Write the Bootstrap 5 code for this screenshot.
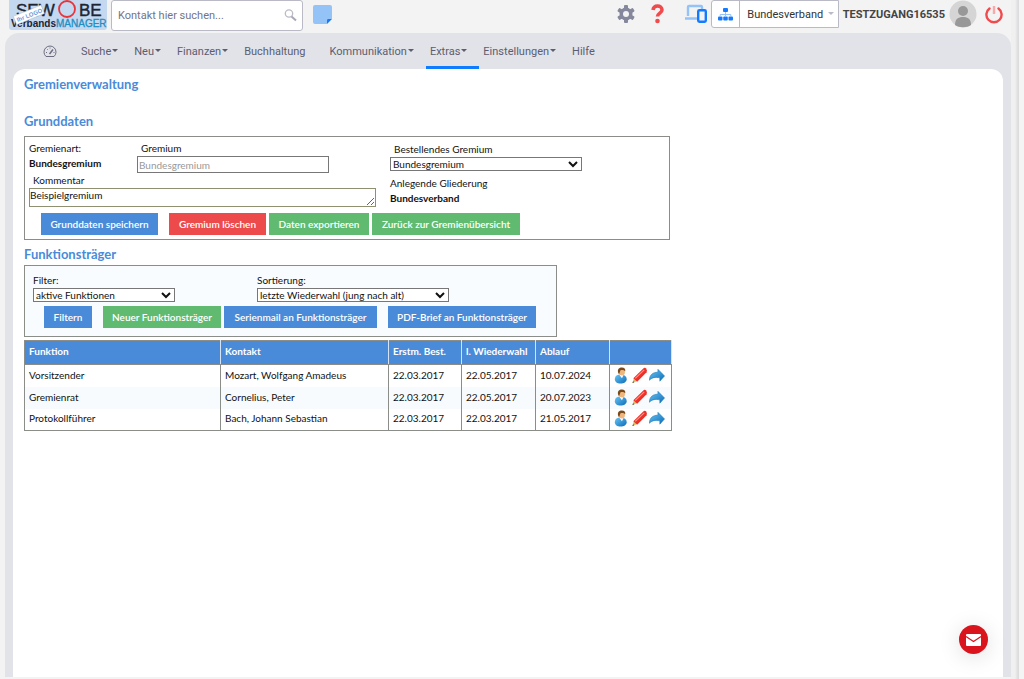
<!DOCTYPE html>
<html lang="de">
<head>
<meta charset="utf-8">
<meta name="viewport" content="width=device-width, initial-scale=1">
<title>Gremienverwaltung</title>
<link href="https://cdn.jsdelivr.net/npm/bootstrap@5.3.0/dist/css/bootstrap.min.css" rel="stylesheet">
<style>
  body { font: 10px/15px Lato, "Trebuchet MS", sans-serif; color: #111; background: #f3f3f4; }
  .page-shell { min-height: 100vh; padding: 0 0 2px 5px; }
  .scroll-rail { width: 13px; flex: none; background: linear-gradient(90deg, #f0f0f1 0 4px, #dcdcde 7px 8px, #f4f4f5 8px); }
  .topbar { height: 33px; padding: 0 8px 0 3px; font-family: Roboto, sans-serif; }
  .brand-logo { width: 100px; height: 31px; }
  .search-group { width: 192px; height: 31px; margin-left: 3px; background: #fff; border: 1px solid #b9bac6; border-radius: 3px; }
  .search-group input { min-width: 0; border: 0; outline: 0; background: none; font-size: 11px; padding: 0 0 0 6px; }
  .search-group input::placeholder { color: #737487; opacity: 1; }
  .plain-btn { border: 0; background: none; padding: 0; line-height: 0; }
  .org-picker { width: 128px; height: 28px; border: 1px solid #b9bac6; background: #fff; border-radius: 3px 0 0 3px; }
  .org-picker .tree { width: 28px; border-right: 1px solid #b9bac6; }
  .org-picker .name { font-size: 11px; color: #333; line-height: 15px; }
  .org-picker .name::after { color: #b9bac6; margin-left: 5px; border-width: 3px; border-bottom: 0; }
  .user-name { font-size: 11px; font-weight: 700; color: #444; }
  .frame { background: #e2e3e8; border-radius: 14px 14px 0 0; padding: 0 8px; }
  .mainnav { height: 36px; padding-left: 26px; font-family: Roboto, sans-serif; }
  .mainnav .nav-link { font-size: 11px; line-height: 37px; height: 36px; padding: 0 4px; color: #5c5d70; white-space: nowrap; }
  .mainnav .nav-link.dropdown-toggle::after { margin-left: 1px; border-width: 3px; border-bottom: 0; vertical-align: 3px; }
  .mainnav .nav-link.active { border-bottom: 3px solid #0f7bff; padding-right: 12px; }
  .sheet { background: #fff; border-radius: 12px 12px 0 0; padding: 8px 11px; }
  .sheet h1, .sheet h2 { font-size: 13px; line-height: 15px; font-weight: 700; color: #4a8bd9; margin: 0; }
  .sheet h1 { margin-bottom: 22px; }
  .panel { border: 1px solid #8a8d88; max-width: 646px; }
  .panel-filter { background: #f9fcff; max-width: 533px; height: 72px; padding: 7px 8px; }
  .panel-base { height: 104px; padding: 4px; margin-top: 7px; }
  .field { display: block; width: 192px; border: 1px solid #777; background: #fff; padding: 0; border-radius: 0; color: #111; }
  input.field { height: 17px; padding: 0 1px; }
  input.field::placeholder { color: #999; opacity: 1; }
  textarea.field { width: 347px; height: 19px; line-height: 13px; border-color: #8f9070; padding: 0; overflow: hidden; }
  select.field { height: 14px; line-height: 12px; padding: 0 16px 0 2px; appearance: none;
    background: #fff url("data:image/svg+xml,%3Csvg xmlns='http://www.w3.org/2000/svg' width='10' height='7'%3E%3Cpath d='M1 1l4 4 4-4' fill='none' stroke='%23111' stroke-width='2'/%3E%3C/svg%3E") no-repeat right 3px center; }
  select.short-field { width: 142px; }
  .col-left { width: 361px; }
  .col-right { padding-top: 1px; }
  .created-by { margin-top: 5px; }
  .col-kind { width: 108px; }
  .col-filter { width: 224px; }
  .act-row { margin-top: 6px; padding-left: 12px; }
  .filter-row { margin-top: 4px; padding-left: 11px; }
  .act-group { gap: 3px; margin: 0 11px; }
  .act { height: 22px; border: 0; border-radius: 0; color: #fff; line-height: 22px; font-weight: 600; padding: 0; white-space: nowrap; }
  .act-blue { background: #4a8bd9; } .act-red { background: #ed4a4c; } .act-green { background: #60bb70; }
  .w-a { width: 117px; } .w-b { width: 97px; } .w-c { width: 100px; } .w-d { width: 148px; }
  .w-e { width: 48px; } .w-f { width: 118px; } .w-g { width: 153px; }
  .people { width: 100%; max-width: 647px; table-layout: fixed; border: 1px solid #8a8d88; margin-top: 3px; border-collapse: collapse; }
  .people th { height: 24px; background: #4a8bd9; color: #fff; border-right: 1px solid #d5e3f5; border-bottom: 1px solid #8a8d88; padding: 0 0 2px 4px; white-space: nowrap; }
  .people td { height: 22px; border-right: 1px solid #8a8d88; padding: 0 0 1px 4px; white-space: nowrap; }
  .people tbody tr:nth-child(even) { background: #f8fbfe; }
  .mail-fab { position: fixed; right: 36px; bottom: 25px; width: 29px; height: 29px; border: 0; border-radius: 50%; background: #da141d; padding: 0; line-height: 0; box-shadow: 0 3px 22px #0002; }
</style>
</head>
<body>
<svg width="0" height="0" class="position-absolute" aria-hidden="true">
  <defs>
    <linearGradient id="blue" x2="1" y2="1"><stop stop-color="#69c5f5"/><stop offset="1" stop-color="#0b6cb8"/></linearGradient>
  </defs>
  <symbol id="person" viewBox="1 0 14 18">
    <path d="M1.500 13c0-4 3-5 6-5 4 0 6.500 2 6.500 5 0 3-3 4.500-6.500 4.500s-6-1.500-6-4.500z" fill="url(#blue)"/>
    <path d="M6 8l3 4 2-4z" fill="#fff"/>
    <ellipse cx="9" cy="5" rx="3.200" ry="4" fill="#efb77d"/>
    <path d="M5 6c-1-4 1-5.500 4-5.500 2.500 0 4 1.500 3.500 4C11 3 9 3 7.500 3.500 7 5 6.500 6 6 8z" fill="#7a4a1c"/>
  </symbol>
  <symbol id="pencil" viewBox="0 0 18 18">
    <path d="M1.500 17l1.500-5 3 3z" fill="#d7bd62"/><path d="M1.500 17l.7-2 1.300 1.200z" fill="#443"/>
    <path d="M2.500 12L12.500 2Q14.500 0 16 1.500T16.500 5.500L6.500 15.500z" fill="#ed3028"/>
    <path d="M4.500 12L14 3" stroke="#ff9184" stroke-width="1.200"/>
  </symbol>
  <symbol id="forward" viewBox="0 0 18 18">
    <path d="M1 14C1 8 5 5.500 10 5.500V2.500l7 7-5 5.500v-3.500C7 10.500 4 11 1 14z" fill="url(#blue)" stroke="#1679b4" stroke-width=".6"/>
  </symbol>
</svg>
<div class="d-flex">
  <div class="page-shell d-flex flex-column flex-grow-1">
    <header class="topbar d-flex align-items-start">
      <a href="#" aria-label="SEWOBE VerbandsMANAGER" class="flex-shrink-0 lh-1">
        <svg class="brand-logo" viewBox="0 0 100 31">
          <rect x="1" y="-4" width="98" height="34" rx="3" fill="#c4d8ef"/>
          <g font-family="Liberation Sans, sans-serif">
            <text x="8" y="16" font-size="17" fill="#1d2533" stroke="#1d2533" stroke-width=".4">SEW</text>
            <text x="71" y="16" font-size="17" fill="#1d2533" stroke="#1d2533" stroke-width=".4">BE</text>
            <circle cx="59" cy="9" r="8" fill="none" stroke="#e8343b" stroke-width="1.800"/>
            <text x="3" y="27" font-size="10" font-weight="700" fill="#223">Verbands</text>
            <text x="48" y="27" font-size="10" fill="#1c8fc4" stroke="#1c8fc4" stroke-width=".3">MANAGER</text>
            <g transform="rotate(-22 22 15)"><rect x="6" y="10" width="30" height="9" fill="#fff" stroke="#b5bcc5" stroke-width=".5"/><text x="8" y="17" font-size="6" font-weight="700" fill="#5f98dc">Ihr LOGO</text></g>
          </g>
        </svg>
      </a>
      <div class="search-group d-flex align-items-center flex-shrink-0">
        <input type="text" class="flex-grow-1" placeholder="Kontakt hier suchen..." aria-label="Kontakt suchen">
        <button class="plain-btn me-1" aria-label="Suchen"><svg width="15" height="15" viewBox="0 0 15 15"><circle cx="6" cy="5.500" r="3.700" fill="none" stroke="#bbbbc6" stroke-width="1.300"/><path d="M8.500 8.500l4.500 4" stroke="#a9a9b6" stroke-width="2"/></svg></button>
      </div>
      <button class="plain-btn mt-1 ms-2" aria-label="Notiz"><svg width="23" height="21" viewBox="-2 0 23 21"><path d="M0 3q0-2 2-2h15q2 0 2 2v12h-4q-1 0-1 1v4H2q-2 0-2-2z" fill="#94c3f8"/><path d="M14 20v-4q0-1 1-1h4z" fill="#147aff"/></svg></button>
      <div class="d-flex align-items-center ms-auto flex-shrink-0">
        <button class="plain-btn" aria-label="Einstellungen"><svg width="18" height="18" viewBox="0 0 18 18"><g fill="#85879d"><circle cx="9" cy="9" r="6.500"/><rect x="7" y="0" width="4" height="18" rx="1"/><rect x="7" y="0" width="4" height="18" rx="1" transform="rotate(60 9 9)"/><rect x="7" y="0" width="4" height="18" rx="1" transform="rotate(120 9 9)"/></g><circle cx="9" cy="9" r="3" fill="#f3f3f4"/></svg></button>
        <button class="plain-btn ms-3" aria-label="Hilfe"><svg width="13" height="20" viewBox="0 0 13 20"><path d="M2 6C2.500 3 4 2 6.500 2 9 2 11 3.500 11 6c0 3-4.500 3.200-4.500 6.500" fill="none" stroke="#f04a4c" stroke-width="3.600"/><circle cx="6.500" cy="17" r="2.300" fill="#f04a4c"/></svg></button>
        <button class="plain-btn ms-3 ps-1" aria-label="Geräte"><svg width="23" height="20" viewBox="0 0 23 20"><path d="M4 12V3q0-1 1-1h12q1 0 1 1v2M1 14.500h12" fill="none" stroke="#94c3f8" stroke-width="2.400"/><rect x="14.200" y="6.200" width="7.600" height="11.600" rx="1.200" fill="none" stroke="#147aff" stroke-width="2.400"/></svg></button>
        <div class="org-picker d-flex ms-1">
          <button class="plain-btn tree flex-shrink-0" aria-label="Gliederungen"><svg width="15" height="13" viewBox="0 0 15 13" fill="#147aff"><rect x="5" y="0" width="5" height="4" rx="1"/><rect x="0" y="8.500" width="4.500" height="4" rx="1"/><rect x="5.250" y="8.500" width="4.500" height="4" rx="1"/><rect x="10.500" y="8.500" width="4.500" height="4" rx="1"/><path d="M7.500 4v5M2.200 9V6.500h10.600V9" fill="none" stroke="#94c3f8"/></svg></button>
          <button class="plain-btn name dropdown-toggle flex-grow-1 text-nowrap ps-1">Bundesverband</button>
        </div>
        <span class="user-name ms-1">TESTZUGANG16535</span>
        <svg class="ms-1" width="28" height="28" viewBox="0 0 28 28"><circle cx="14" cy="14" r="13.500" fill="#d5d5d5"/><circle cx="14" cy="11" r="5" fill="#989898"/><path d="M6 25c0-6 3-8 8-8s8 2 8 8c-4 3-12 3-16 0z" fill="#989898"/></svg>
        <button class="plain-btn ms-2" aria-label="Abmelden"><svg width="18" height="20" viewBox="0 0 18 20"><path d="M4.500 4.500a7.600 7.600 0 1 0 9 0" fill="none" stroke="#f04a4c" stroke-width="2.400" stroke-linecap="round"/><path d="M9 2v8" stroke="#f8a9aa" stroke-width="2.400"/></svg></button>
      </div>
    </header>
    <div class="frame d-flex flex-column flex-grow-1">
      <nav class="mainnav nav flex-nowrap align-items-start">
        <a class="nav-link" href="#" aria-label="Übersicht"><svg class="d-block mt-2 pt-1" width="14" height="18" viewBox="0 1 14 14" fill="none" stroke="#6c6d80"><path d="M3 12.500a6 6 0 1 1 8 0z"/><path d="M6.500 10L10 5.500" stroke-width="1.500"/><path d="M3 8.500h1M4 5l.7.7M7 3.500v1M10.500 8.500h1"/></svg></a>
        <a class="nav-link dropdown-toggle ms-3" href="#">Suche</a>
        <a class="nav-link dropdown-toggle ms-2" href="#">Neu</a>
        <a class="nav-link dropdown-toggle ms-2" href="#">Finanzen</a>
        <a class="nav-link ms-2" href="#">Buchhaltung</a>
        <a class="nav-link dropdown-toggle ms-3" href="#">Kommunikation</a>
        <a class="nav-link dropdown-toggle active ms-2" href="#">Extras</a>
        <a class="nav-link dropdown-toggle" href="#">Einstellungen</a>
        <a class="nav-link ms-2" href="#">Hilfe</a>
      </nav>
      <main class="sheet flex-grow-1">
        <h1>Gremienverwaltung</h1>
        <h2>Grunddaten</h2>
        <form class="panel panel-base">
          <div class="d-flex">
            <div class="col-left">
              <div class="d-flex">
                <div class="col-kind">Gremienart:<br><b>Bundesgremium</b></div>
                <div><label class="d-block ps-1" for="gremium">Gremium</label><input class="field" id="gremium" type="text" placeholder="Bundesgremium"></div>
              </div>
              <label class="d-block ps-1" for="kommentar">Kommentar</label>
              <textarea class="field" id="kommentar">Beispielgremium</textarea>
            </div>
            <div class="col-right">
              <label class="d-block ps-1" for="bestell">Bestellendes Gremium</label>
              <select class="field" id="bestell"><option>Bundesgremium</option></select>
              <div class="created-by">Anlegende Gliederung<br><b>Bundesverband</b></div>
            </div>
          </div>
          <div class="act-row d-flex">
            <button type="button" class="act act-blue w-a">Grunddaten speichern</button>
            <div class="act-group d-flex">
              <button type="button" class="act act-red w-b">Gremium löschen</button>
              <button type="button" class="act act-green w-c">Daten exportieren</button>
              <button type="button" class="act act-green w-d">Zurück zur Gremienübersicht</button>
            </div>
          </div>
        </form>
        <h2 class="mt-2 mb-1 lh-1">Funktionsträger</h2>
        <form class="panel panel-filter">
          <div class="d-flex">
            <div class="col-filter"><label class="d-block" for="filter">Filter:</label><select class="field short-field" id="filter"><option>aktive Funktionen</option></select></div>
            <div><label class="d-block" for="sort">Sortierung:</label><select class="field" id="sort"><option>letzte Wiederwahl (jung nach alt)</option></select></div>
          </div>
          <div class="filter-row d-flex">
            <button type="button" class="act act-blue w-e">Filtern</button>
            <div class="act-group d-flex">
              <button type="button" class="act act-green w-f">Neuer Funktionsträger</button>
              <button type="button" class="act act-blue w-g">Serienmail an Funktionsträger</button>
            </div>
            <button type="button" class="act act-blue w-d">PDF-Brief an Funktionsträger</button>
          </div>
        </form>
        <table class="people">
          <colgroup><col style="width:196px"><col style="width:168px"><col style="width:73px"><col style="width:74px"><col style="width:74px"><col style="width:62px"></colgroup>
          <thead><tr><th>Funktion</th><th>Kontakt</th><th>Erstm. Best.</th><th>l. Wiederwahl</th><th>Ablauf</th><th></th></tr></thead>
          <tbody>
            <tr><td>Vorsitzender</td><td>Mozart, Wolfgang Amadeus</td><td>22.03.2017</td><td>22.05.2017</td><td>10.07.2024</td><td><a href="#" aria-label="Person"><svg width="14" height="17"><use href="#person"/></svg></a> <a href="#" aria-label="Bearbeiten"><svg width="17" height="17"><use href="#pencil"/></svg></a><a href="#" aria-label="Weiter"><svg width="18" height="17"><use href="#forward"/></svg></a></td></tr>
            <tr><td>Gremienrat</td><td>Cornelius, Peter</td><td>22.03.2017</td><td>22.05.2017</td><td>20.07.2023</td><td><a href="#" aria-label="Person"><svg width="14" height="17"><use href="#person"/></svg></a> <a href="#" aria-label="Bearbeiten"><svg width="17" height="17"><use href="#pencil"/></svg></a><a href="#" aria-label="Weiter"><svg width="18" height="17"><use href="#forward"/></svg></a></td></tr>
            <tr><td>Protokollführer</td><td>Bach, Johann Sebastian</td><td>22.03.2017</td><td>22.03.2017</td><td>21.05.2017</td><td><a href="#" aria-label="Person"><svg width="14" height="17"><use href="#person"/></svg></a> <a href="#" aria-label="Bearbeiten"><svg width="17" height="17"><use href="#pencil"/></svg></a><a href="#" aria-label="Weiter"><svg width="18" height="17"><use href="#forward"/></svg></a></td></tr>
          </tbody>
        </table>
      </main>
    </div>
  </div>
  <div class="scroll-rail"></div>
</div>
<button class="mail-fab" aria-label="Nachricht"><svg width="15" height="12" viewBox="0 0 15 12"><rect width="15" height="12" rx="1" fill="#fff"/><path d="M0 2.500l7.500 5 7.500-5" fill="none" stroke="#da141d" stroke-width="1.200"/></svg></button>
<script src="https://cdn.jsdelivr.net/npm/bootstrap@5.3.0/dist/js/bootstrap.bundle.min.js"></script>
</body>
</html>
